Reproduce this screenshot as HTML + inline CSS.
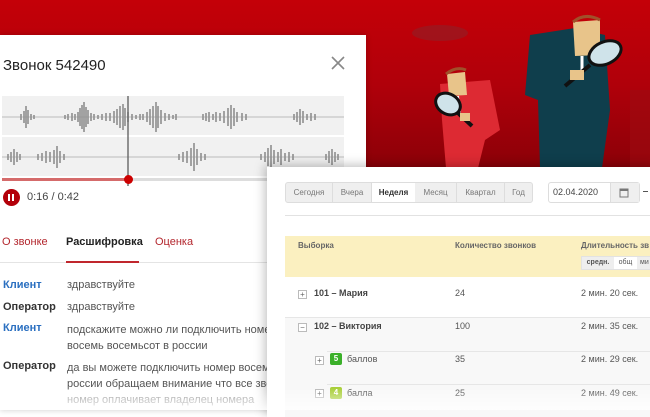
<!DOCTYPE html>
<html><head><meta charset="utf-8"><style>
*{margin:0;padding:0;box-sizing:border-box}
body{width:650px;height:410px;overflow:hidden;position:relative;font-family:"Liberation Sans","DejaVu Sans",sans-serif;background:#fff}
.bg{position:absolute;left:0;top:0;width:650px;height:170px;background:linear-gradient(180deg,#c40008 0%,#b0000a 50%,#8a0008 100%)}
.lp{position:absolute;left:0;top:35px;width:366px;height:375px;background:#fff;box-shadow:0 0 6px rgba(0,0,0,.2)}
.rp{position:absolute;left:267px;top:167px;width:390px;height:250px;background:#fff;box-shadow:-2px -2px 10px rgba(0,0,0,.25)}
.a{position:absolute;white-space:nowrap}
.t{font-size:11px;color:#444}
.b{font-weight:bold}
.fade{position:absolute;left:0;top:388px;width:650px;height:22px;background:linear-gradient(180deg,rgba(255,255,255,0),rgba(255,255,255,.8))}
</style></head><body>
<div class="bg"></div>
<svg class="a" style="left:360px;top:0" width="290" height="170">
 <ellipse cx="80" cy="33" rx="28" ry="8" fill="#9a1820" opacity=".8"/>
 <rect x="270" y="90" width="20" height="80" fill="#9c0a10" opacity=".6"/>
 <polygon points="170,35 215,28 245,35 250,110 242,168 180,168 178,100 165,95" fill="#0f3e4c"/>
 <polygon points="213,22 240,20 240,55 215,56" fill="#e8c48a"/>
 <path d="M213,22 q12,-10 27,-2" stroke="#a0502a" stroke-width="3" fill="none"/>
 <line x1="222" y1="56" x2="222" y2="70" stroke="#fff" stroke-width="3"/>
 <ellipse cx="245" cy="53" rx="17" ry="11" fill="#cfe3ea" stroke="#111" stroke-width="3" transform="rotate(-25 245 53)"/>
 <line x1="230" y1="65" x2="205" y2="86" stroke="#111" stroke-width="4"/>
 <rect x="210" y="70" width="14" height="10" fill="#e8c48a"/>
 <polygon points="80,84 130,80 140,130 125,140 118,168 86,168 82,120" fill="#dd2a33"/>
 <polygon points="87,74 105,72 107,95 89,96" fill="#e8c48a"/>
 <path d="M86,74 q10,-8 20,-4" stroke="#a0502a" stroke-width="3" fill="none"/>
 <line x1="98" y1="96" x2="100" y2="115" stroke="#fff" stroke-width="2"/>
 <ellipse cx="88" cy="104" rx="13" ry="10" fill="#cfe3ea" stroke="#111" stroke-width="3" transform="rotate(30 88 104)"/>
 <line x1="98" y1="113" x2="112" y2="126" stroke="#111" stroke-width="4"/>
 <rect x="100" y="113" width="10" height="8" fill="#e8c48a"/>
</svg>

<div class="lp">
 <div class="a" style="left:3px;top:22px;font-size:15px;color:#222">Звонок 542490</div>
 <svg class="a" style="left:330px;top:20px" width="16" height="16"><path d="M2 2L14 14M14 2L2 14" stroke="#888" stroke-width="1.6"/></svg>
 <svg class="a" style="left:2px;top:61px" width="342" height="90">
  <rect width="342" height="80" fill="#f1f1f1"/>
  <line x1="0" y1="40" x2="342" y2="40" stroke="#fff" stroke-width="2"/>
  <line x1="0" y1="21" x2="342" y2="21" stroke="#bbb"/>
  <line x1="0" y1="61" x2="342" y2="61" stroke="#bbb"/>
  <g stroke="#8f8f8f" stroke-width="1.6">
   <path d="M19 18v6M22 15v12M24 10v22M26 14v14M29 18v6M32 19v4
   M63 19v4M66 18v6M70 17v8M73 18v6M76 16v10M78 12v18M80 9v24M82 6v30M84 11v20M86 14v14M89 17v8M92 18v6M96 19v4M100 18v6M104 17v8M108 17v8M112 15v12M115 13v16M118 10v22M121 8v26M123 12v18M126 16v10M130 18v6M134 19v4M138 18v6
   M141 18v6M145 16v10M148 13v16M151 10v22M154 6v30M156 10v22M159 14v14M163 17v8M167 18v6M171 19v4M174 18v6
   M201 18v6M204 17v8M207 16v10M211 18v6M214 16v10M218 17v8M222 15v12M226 12v18M229 9v24M232 12v18M235 16v10M240 17v8M244 18v6
   M292 18v6M295 16v10M298 13v16M301 15v12M305 18v6M309 17v8M313 18v6"/>
   <path d="M6 58v6M9 56v10M12 53v16M15 56v10M18 58v6M36 58v6M40 57v8M44 55v12M48 56v10M52 54v14M55 50v22M58 55v12M62 58v6
   M177 58v6M181 56v10M185 55v12M189 52v18M192 47v28M195 53v16M199 57v8M203 58v6
   M259 58v6M263 56v10M266 52v18M269 49v24M272 54v14M276 56v10M279 53v16M283 57v8M287 56v10M291 58v6
   M324 58v6M327 55v12M330 53v16M333 56v10M336 58v6"/>
  </g>
  <line x1="126" y1="0" x2="126" y2="90" stroke="#666" stroke-width="1.4"/>
 </svg>
 <div class="a" style="left:2px;top:143px;width:342px;height:3px;background:#ddd"></div>
 <div class="a" style="left:2px;top:143px;width:126px;height:3px;background:#d56b6b"></div>
 <div class="a" style="left:124px;top:140px;width:9px;height:9px;border-radius:50%;background:#c00"></div>
 <div class="a" style="left:3px;top:154px;width:17px;height:17px;border-radius:50%;background:#b3000a"></div>
 <div class="a" style="left:8px;top:159px;width:2px;height:7px;background:#fff"></div>
 <div class="a" style="left:12px;top:159px;width:2px;height:7px;background:#fff"></div>
 <div class="a" style="left:27px;top:156px;font-size:11px;color:#444">0:16 / 0:42</div>
 <div class="a" style="left:2px;top:201px;font-size:11px;color:#b3262d">О звонке</div>
 <div class="a b" style="left:66px;top:201px;font-size:11px;color:#222">Расшифровка</div>
 <div class="a" style="left:155px;top:201px;font-size:11px;color:#b3262d">Оценка</div>
 <div class="a" style="left:0;top:227px;width:366px;height:1px;background:#e4e4e4"></div>
 <div class="a" style="left:66px;top:226px;width:73px;height:2px;background:#c0262d"></div>
 <div class="a b t" style="left:3px;top:244px;color:#2a6fc0">Клиент</div>
 <div class="a t" style="left:67px;top:244px;color:#555">здравствуйте</div>
 <div class="a b t" style="left:3px;top:266px;color:#333">Оператор</div>
 <div class="a t" style="left:67px;top:266px;color:#555">здравствуйте</div>
 <div class="a b t" style="left:3px;top:287px;color:#2a6fc0">Клиент</div>
 <div class="a t" style="left:67px;top:287px;color:#555;line-height:16px">подскажите можно ли подключить номер<br>восемь восемьсот в россии</div>
 <div class="a b t" style="left:3px;top:325px;color:#333">Оператор</div>
 <div class="a t" style="left:67px;top:325px;color:#555;line-height:16px">да вы можете подключить номер восемь<br>россии обращаем внимание что все звон<br><span style="color:#999">номер оплачивает владелец номера</span></div>
</div>

<div class="rp">
 <div class="a" style="left:18px;top:15px;height:21px;width:248px;border:1px solid #ddd;border-radius:3px;background:#efefef;font-size:8px;color:#777;display:flex">
  <div style="width:47px;text-align:center;line-height:19px;border-right:1px solid #ddd">Сегодня</div>
  <div style="width:39px;text-align:center;line-height:19px;border-right:1px solid #ddd">Вчера</div>
  <div style="width:43px;text-align:center;line-height:19px;background:#fff;color:#333;font-weight:bold">Неделя</div>
  <div style="width:42px;text-align:center;line-height:19px;border-right:1px solid #ddd">Месяц</div>
  <div style="width:48px;text-align:center;line-height:19px;border-right:1px solid #ddd">Квартал</div>
  <div style="width:27px;text-align:center;line-height:19px">Год</div>
 </div>
 <div class="a" style="left:281px;top:15px;height:21px;width:92px;border:1px solid #ddd;border-radius:3px;background:#fff;font-size:9px;color:#444;line-height:19px;padding-left:4px">02.04.2020</div>
 <div class="a" style="left:343px;top:16px;width:29px;height:19px;background:#efefef;border-left:1px solid #ddd"></div>
 <svg class="a" style="left:352px;top:20px" width="10" height="11"><rect x="1" y="2" width="8" height="8" fill="none" stroke="#777"/><rect x="1" y="2" width="8" height="2" fill="#777"/></svg>
 <div class="a" style="left:376px;top:24px;width:5px;height:1px;background:#555"></div>
 <div class="a" style="left:18px;top:48px;width:380px;height:1px;background:#e2e2e2"></div>
 <div class="a" style="left:18px;top:69px;width:380px;height:41px;background:#fbf0c0"></div>
 <div class="a b" style="left:31px;top:74px;font-size:8px;color:#666">Выборка</div>
 <div class="a b" style="left:188px;top:74px;font-size:8px;color:#666">Количество звонков</div>
 <div class="a b" style="left:314px;top:74px;font-size:8px;color:#666">Длительность зв</div>
 <div class="a" style="left:314px;top:89px;height:14px;width:80px;background:#eee;border:1px solid #e2e2e2;font-size:7px;color:#555;display:flex;line-height:12px">
  <div style="width:32px;text-align:center;font-weight:bold">средн.</div><div style="width:23px;text-align:center;background:#fff">общ</div><div style="padding-left:3px">ми</div>
 </div>
 <div class="a" style="left:18px;top:110px;width:380px;height:40px;background:#fff"></div>
 <div class="a" style="left:18px;top:150px;width:380px;height:100px;background:#f8f8f8"></div>
 <div class="a" style="left:18px;top:150px;width:380px;height:1px;background:#e6e6e6"></div>
 <div class="a" style="left:60px;top:184px;width:340px;height:1px;background:#e6e6e6"></div>
 <div class="a" style="left:60px;top:217px;width:340px;height:1px;background:#e6e6e6"></div>
 <div class="a" style="left:31px;top:123px;width:9px;height:9px;border:1px solid #bbb;background:#fff;font-size:8px;line-height:7px;text-align:center;color:#666">+</div>
 <div class="a b" style="left:47px;top:121px;font-size:9px;color:#444">101 – Мария</div>
 <div class="a" style="left:188px;top:121px;font-size:9px;color:#555">24</div>
 <div class="a" style="left:314px;top:121px;font-size:9px;color:#555">2 мин. 20 сек.</div>
 <div class="a" style="left:31px;top:156px;width:9px;height:9px;border:1px solid #bbb;background:#fff;font-size:8px;line-height:7px;text-align:center;color:#666">−</div>
 <div class="a b" style="left:47px;top:154px;font-size:9px;color:#444">102 – Виктория</div>
 <div class="a" style="left:188px;top:154px;font-size:9px;color:#555">100</div>
 <div class="a" style="left:314px;top:154px;font-size:9px;color:#555">2 мин. 35 сек.</div>
 <div class="a" style="left:48px;top:189px;width:9px;height:9px;border:1px solid #bbb;background:#fff;font-size:8px;line-height:7px;text-align:center;color:#666">+</div>
 <div class="a b" style="left:63px;top:186px;width:12px;height:12px;border-radius:2px;background:#3bb02a;color:#fff;font-size:8px;text-align:center;line-height:12px">5</div>
 <div class="a" style="left:80px;top:187px;font-size:9px;color:#555">баллов</div>
 <div class="a" style="left:188px;top:187px;font-size:9px;color:#555">35</div>
 <div class="a" style="left:314px;top:187px;font-size:9px;color:#555">2 мин. 29 сек.</div>
 <div class="a" style="left:48px;top:222px;width:9px;height:9px;border:1px solid #bbb;background:#fff;font-size:8px;line-height:7px;text-align:center;color:#666">+</div>
 <div class="a b" style="left:63px;top:220px;width:12px;height:12px;border-radius:2px;background:#a9cf3a;color:#fff;font-size:8px;text-align:center;line-height:12px">4</div>
 <div class="a" style="left:80px;top:221px;font-size:9px;color:#555">балла</div>
 <div class="a" style="left:188px;top:221px;font-size:9px;color:#555">25</div>
 <div class="a" style="left:314px;top:221px;font-size:9px;color:#555">2 мин. 49 сек.</div>
</div>
<div class="fade"></div>
</body></html>
